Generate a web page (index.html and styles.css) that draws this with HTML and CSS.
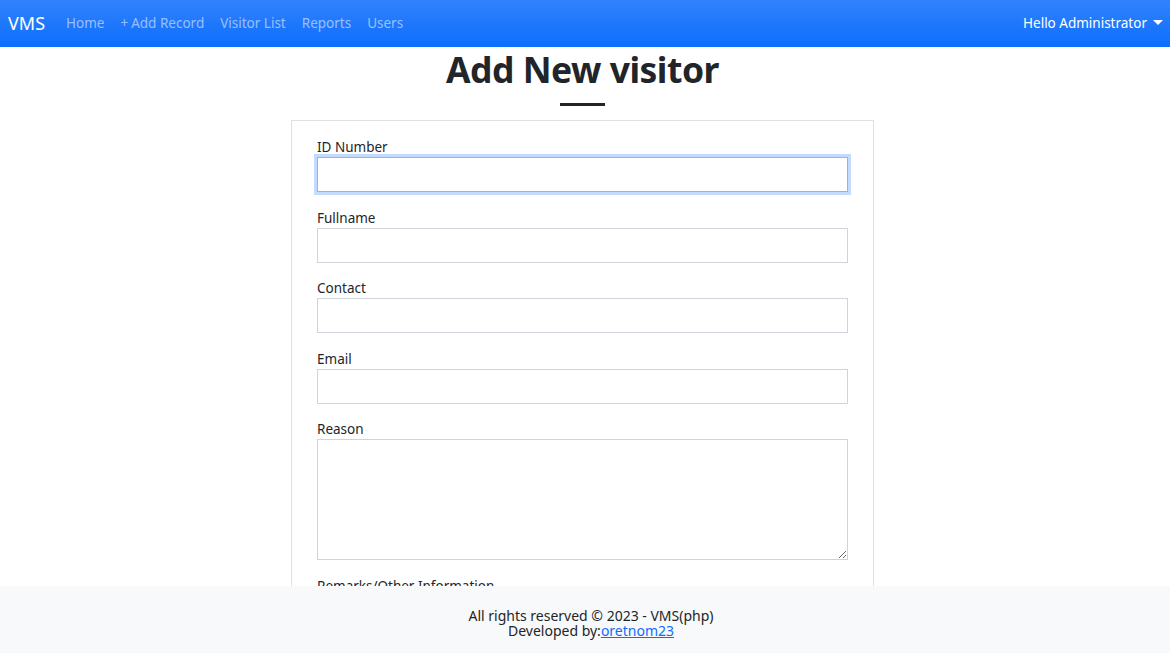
FILE: index.html
```html
<!DOCTYPE html>
<html>
<head>
  <meta charset="UTF-8">
  <meta name="viewport" content="width=device-width, initial-scale=1.0">
  <title>VMS - Add New visitor</title>
  <link rel="stylesheet" href="styles.css">
</head>
<body>

  <nav class="navbar">
    <a class="brand" href="#">VMS</a>
    <ul class="nav-links">
      <li><a href="#">Home</a></li>
      <li><a href="#"><span class="plus">+</span>Add Record</a></li>
      <li><a href="#">Visitor List</a></li>
      <li><a href="#">Reports</a></li>
      <li><a href="#">Users</a></li>
    </ul>
    <a class="user-menu" href="#">Hello Administrator<span class="caret"></span></a>
  </nav>

  <main class="content">
    <h1 class="page-title">Add New visitor</h1>
    <div class="title-line"></div>

    <form class="visitor-form">
      <div class="form-group">
        <label for="idnum">ID Number</label>
        <input type="text" id="idnum" class="form-control focused">
      </div>
      <div class="form-group">
        <label for="fullname">Fullname</label>
        <input type="text" id="fullname" class="form-control">
      </div>
      <div class="form-group">
        <label for="contact">Contact</label>
        <input type="text" id="contact" class="form-control">
      </div>
      <div class="form-group">
        <label for="email">Email</label>
        <input type="email" id="email" class="form-control">
      </div>
      <div class="form-group">
        <label for="reason">Reason</label>
        <textarea id="reason" class="form-control textarea"></textarea>
      </div>
      <div class="form-group">
        <label for="remarks">Remarks/Other Information</label>
        <textarea id="remarks" class="form-control textarea"></textarea>
      </div>
    </form>
  </main>

  <footer class="footer">
    <div>All rights reserved &copy; 2023 - VMS(php)</div>
    <div>Developed by:<a href="#">oretnom23</a></div>
  </footer>

</body>
</html>
```

FILE: styles.css
```css
html, body {
  height: 100%;
}

body {
  margin: 0;
  font-family: 'Noto Sans', 'Open Sans', sans-serif;
  color: #212529;
  background: #fff;
  display: flex;
  flex-direction: column;
  overflow: hidden;
}

.navbar {
  height: 47px;
  flex-shrink: 0;
  display: flex;
  align-items: center;
  padding: 0 7px 0 8px;
  background: linear-gradient(to bottom, #3182fb, #0d6efd);
}

.brand {
  color: #fff;
  text-decoration: none;
  font-size: 18px;
  margin-right: 13px;
  margin-top: -2px;
}

.nav-links {
  list-style: none;
  display: flex;
  margin: 0;
  padding: 0;
  margin-top: -2px;
}

.nav-links a {
  display: block;
  padding: 8px 8px;
  font-size: 13.5px;
  color: rgba(255, 255, 255, 0.55);
  text-decoration: none;
}

.plus {
  margin-right: 3px;
}

.user-menu {
  margin-left: auto;
  margin-top: -2px;
  color: #fff;
  font-size: 13.5px;
  text-decoration: none;
  display: flex;
  align-items: center;
}

.caret {
  margin-left: 6px;
  border-top: 5px solid #fff;
  border-left: 5px solid transparent;
  border-right: 5px solid transparent;
}

.content {
  flex: 1;
  overflow: hidden;
  display: flex;
  flex-direction: column;
  align-items: center;
  padding-right: 5px;
}

.content > * {
  flex-shrink: 0;
}

.page-title {
  margin: -2px 0 0;
  font-size: 35.5px;
  letter-spacing: -0.5px;
  font-weight: 700;
  line-height: 49px;
}

.title-line {
  width: 45px;
  height: 3px;
  background: #212529;
  margin-top: 9px;
  margin-bottom: 14px;
}

.visitor-form {
  width: 531px;
  border: 1px solid #dee2e6;
  padding: 16px 25px;
}

.form-group {
  margin-bottom: 15.5px;
}

.form-group label {
  display: block;
  font-size: 13.5px;
  line-height: 19px;
  padding-top: 1px;
}

.form-control {
  display: block;
  box-sizing: border-box;
  width: 100%;
  height: 35px;
  margin: 0;
  border: 1px solid #ced4da;
  border-radius: 0;
  background: #fff;
  font-family: inherit;
  font-size: 14px;
  padding: 4px 10px;
}

.form-control.focused {
  border-color: #86b7fe;
  box-shadow: 0 0 0 3px rgba(13, 110, 253, 0.25);
  outline: none;
}

.textarea {
  height: 121px;
  resize: vertical;
}

.footer {
  height: 67px;
  flex-shrink: 0;
  box-sizing: border-box;
  padding: 22px 0 0 12px;
  background: #f8f9fa;
  text-align: center;
  font-size: 14px;
  line-height: 15px;
}

.footer a {
  color: #0d6efd;
}
```
